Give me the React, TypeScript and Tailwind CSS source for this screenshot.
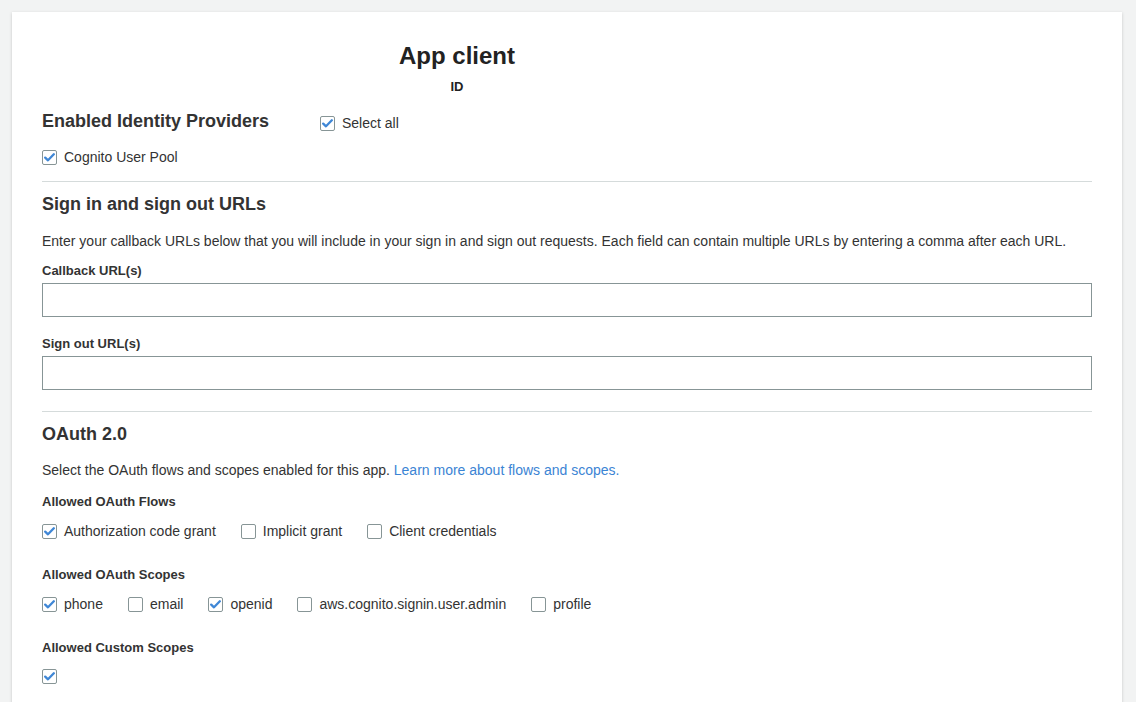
import React from "react";

const font = { fontFamily: '"Liberation Sans", Arial, Helvetica, sans-serif' };

function Box({ checked }: { checked?: boolean }) {
  return (
    <span className="flex h-[15px] w-[15px] shrink-0 items-center justify-center rounded-[2px] border border-[#879596] bg-white">
      {checked && (
        <svg width="11" height="9" viewBox="0 0 11 9" fill="none">
          <path d="M1.2 4.6 L4 7.3 L9.8 1.3" stroke="#3f87d6" strokeWidth="2.3" strokeLinecap="round" strokeLinejoin="round" />
        </svg>
      )}
    </span>
  );
}

function Check({ label, checked }: { label?: string; checked?: boolean }) {
  return (
    <label className="flex h-[20px] items-center gap-[7px] text-[14px] text-[#333]">
      <Box checked={checked} />
      {label && <span>{label}</span>}
    </label>
  );
}

function Label({ children, className = "" }: { children: React.ReactNode; className?: string }) {
  return <p className={`text-[13px] font-bold leading-[16px] text-[#333] ${className}`}>{children}</p>;
}

function Heading({ children, className = "" }: { children: React.ReactNode; className?: string }) {
  return <h2 className={`text-[18px] font-bold leading-[24px] text-[#333] ${className}`}>{children}</h2>;
}

export default function App() {
  const flows = [
    { label: "Authorization code grant", checked: true },
    { label: "Implicit grant" },
    { label: "Client credentials" },
  ];
  const scopes = [
    { label: "phone", checked: true },
    { label: "email" },
    { label: "openid", checked: true },
    { label: "aws.cognito.signin.user.admin" },
    { label: "profile" },
  ];

  return (
    <div className="min-h-[702px] bg-[#f2f3f3] pl-[12px] pr-[14px] pt-[12px]" style={font}>
      <div className="min-h-[720px] bg-white px-[30px] pb-[40px] pt-[30px] shadow-[0_1px_3px_rgba(0,0,0,0.18)]">
        <div className="w-[830px] text-center text-[#222]">
          <h1 className="text-[24px] font-bold leading-[28px]">App client</h1>
          <p className="mt-[9px] text-[13px] font-bold leading-[16px]">ID</p>
        </div>

        <div className="mt-[14px] flex items-start">
          <Heading className="w-[278px]">Enabled Identity Providers</Heading>
          <div className="pt-[4px]">
            <Check label="Select all" checked />
          </div>
        </div>
        <div className="mt-[14px]">
          <Check label="Cognito User Pool" checked />
        </div>

        <div className="mt-[14px] border-t border-[#d5dbdb]" />

        <Heading className="mt-[10px]">Sign in and sign out URLs</Heading>
        <p className="mt-[15px] text-[14px] leading-[20px] text-[#333]">
          Enter your callback URLs below that you will include in your sign in and sign out requests. Each field can contain multiple URLs by entering a comma after each URL.
        </p>
        <Label className="mt-[12px]">Callback URL(s)</Label>
        <input className="mt-[4px] block h-[34px] w-full border border-[#879596] bg-white px-2 text-[14px] outline-none" />
        <Label className="mt-[19px]">Sign out URL(s)</Label>
        <input className="mt-[4px] block h-[34px] w-full border border-[#879596] bg-white px-2 text-[14px] outline-none" />

        <div className="mt-[21px] border-t border-[#d5dbdb]" />

        <Heading className="mt-[10px]">OAuth 2.0</Heading>
        <p className="mt-[14px] text-[14px] leading-[20px] text-[#333]">
          Select the OAuth flows and scopes enabled for this app.{" "}
          <a className="text-[#3b84d4]">Learn more about flows and scopes.</a>
        </p>

        <Label className="mt-[14px]">Allowed OAuth Flows</Label>
        <div className="mt-[11px] flex gap-[25px]">
          {flows.map((f) => (
            <Check key={f.label} label={f.label} checked={f.checked} />
          ))}
        </div>

        <Label className="mt-[26px]">Allowed OAuth Scopes</Label>
        <div className="mt-[11px] flex gap-[25px]">
          {scopes.map((s) => (
            <Check key={s.label} label={s.label} checked={s.checked} />
          ))}
        </div>

        <Label className="mt-[26px]">Allowed Custom Scopes</Label>
        <div className="mt-[10px]">
          <Check checked />
        </div>
      </div>
    </div>
  );
}
